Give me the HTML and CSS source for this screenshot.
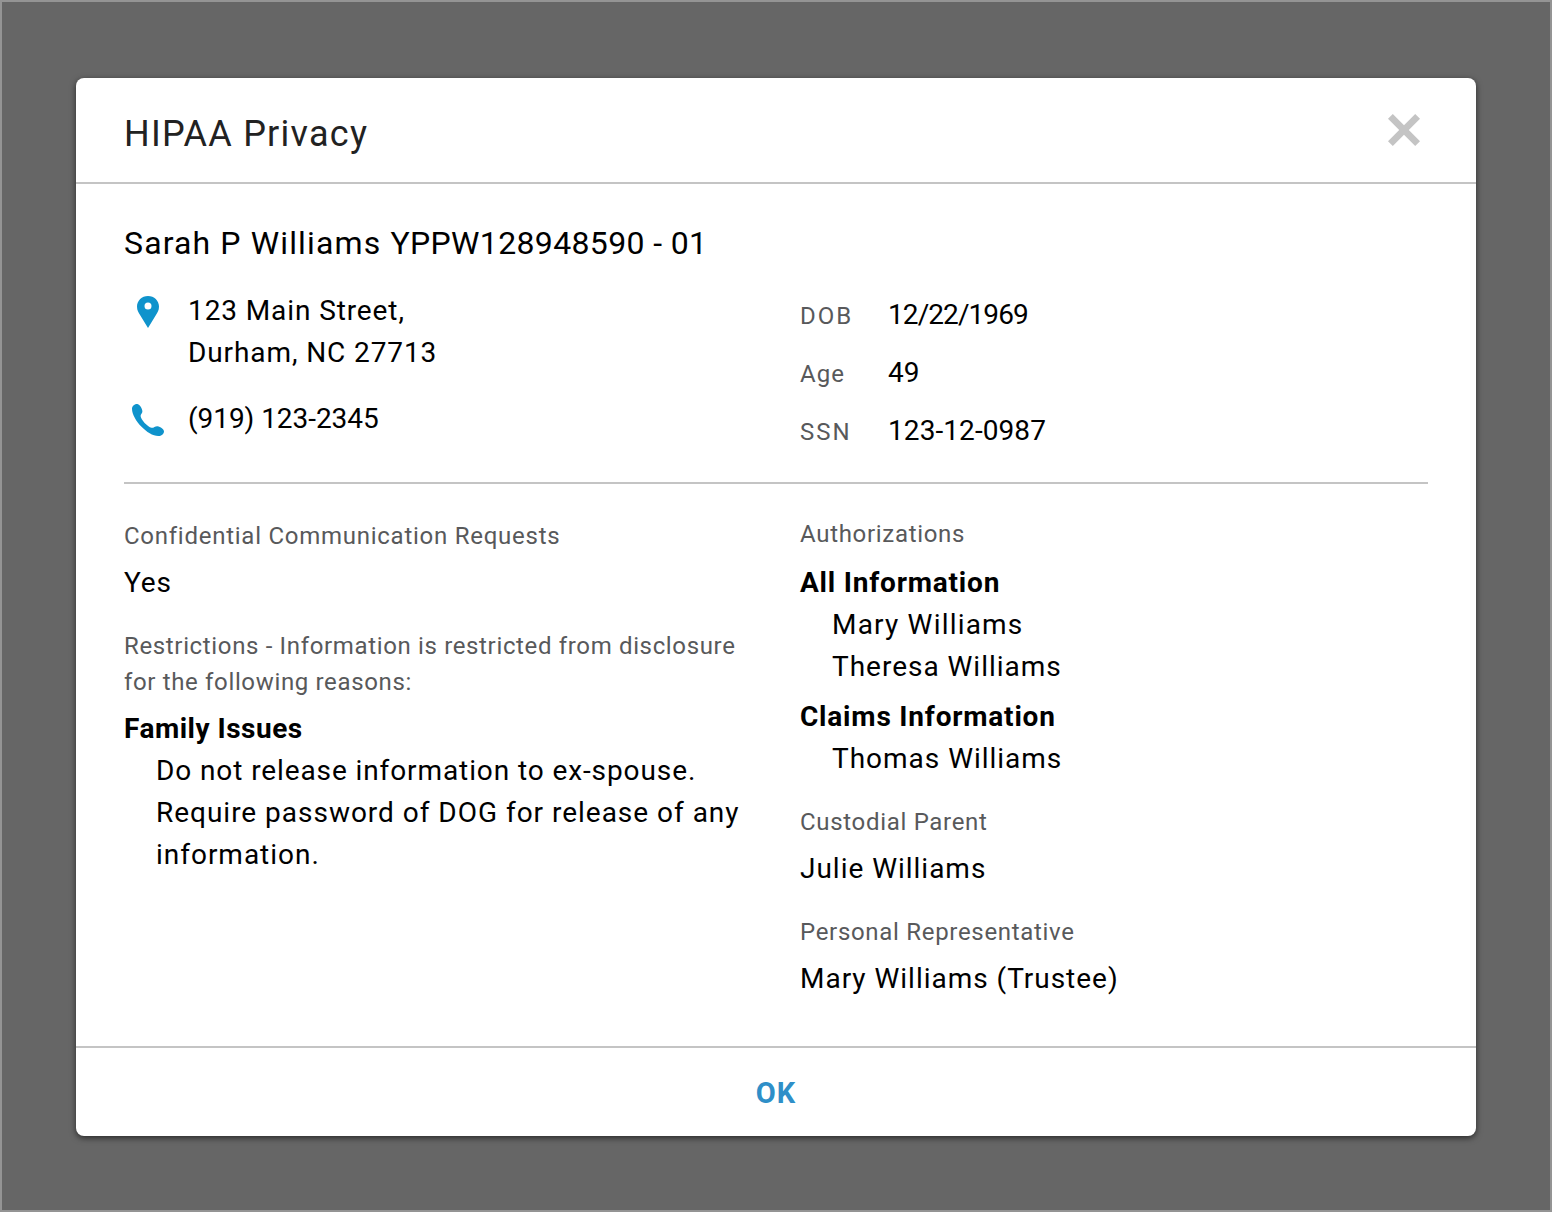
FILE: index.html
```html
<!DOCTYPE html>
<html lang="en">
<head>
<meta charset="utf-8">
<title>HIPAA Privacy</title>
<link rel="stylesheet" href="styles.css">
</head>
<body>
<div class="backdrop">
  <section class="modal" role="dialog" aria-labelledby="modal-title">
    <header class="modal-header">
      <h1 class="modal-title" id="modal-title">HIPAA Privacy</h1>
      <button class="close" aria-label="Close">
        <svg width="32" height="32" viewBox="0 0 32 32"><path d="M4.800 0 16 11.200 27.200 0 32 4.800 20.800 16 32 27.200 27.200 32 16 20.800 4.800 32 0 27.200 11.200 16 0 4.800Z" fill="#c4c4c4"/></svg>
      </button>
    </header>

    <div class="modal-body">
      <h2 class="member">Sarah P Williams <span class="member-id">YPPW128948590 - 01</span></h2>
      <div class="summary">
        <div class="contact">
          <div class="contact-row">
            <svg class="icon" width="48" height="36" viewBox="0 0 48 36"><path fill-rule="evenodd" d="M24 2C17.8 2 13 6.800 13 12.600C13 16.500 14.500 18.700 16.200 21.300L24 34L31.800 21.300C33.500 18.700 35 16.500 35 12.600C35 6.800 30.200 2 24 2ZM24 8.500A3.500 3.500 0 1 1 24 15.500A3.500 3.500 0 1 1 24 8.500Z" fill="#0f93cc"/></svg>
            <p class="text address">123 Main Street,<br>Durham, NC 27713</p>
          </div>
          <div class="contact-row">
            <svg class="icon" width="48" height="36" viewBox="0 0 48 36"><path d="M8 6.800C8 4 10.800 2 13.200 2C15.300 2 18.400 6.500 18.400 9.300C18.400 11.500 16.600 12.200 16.600 14C16.800 17.600 23.500 24.900 27.500 25.800C29.500 26.200 31 24 33.500 24.200C36.500 24.500 40 27.400 40 29.400C40 31.700 37.300 33.900 34.500 34C29 34.100 22.500 30 17.500 24.800C12.200 19.300 8 12.500 8 6.800Z" fill="#0f93cc"/></svg>
            <p class="text phone">(919) 123-2345</p>
          </div>
        </div>
        <dl class="facts">
          <div class="fact"><dt class="label caps">DOB</dt><dd class="text date">12/22/1969</dd></div>
          <div class="fact"><dt class="label age">Age</dt><dd class="text digits">49</dd></div>
          <div class="fact"><dt class="label caps">SSN</dt><dd class="text digits">123-12-0987</dd></div>
        </dl>
      </div>

      <div class="details">
        <div class="column requests">
          <div class="group">
            <h3 class="label confidential">Confidential Communication Requests</h3>
            <p class="text">Yes</p>
          </div>
          <div class="group">
            <h3 class="label restriction">Restrictions - Information is restricted from disclosure for the following reasons:</h3>
            <h4 class="text strong family">Family Issues</h4>
            <p class="text nested">Do not release information to ex-spouse.</p>
            <p class="text nested wide">Require password of DOG for release of any information.</p>
          </div>
        </div>
        <div class="column">
          <div class="group authorizations">
            <h3 class="label">Authorizations</h3>
            <div class="authorization">
              <h4 class="text strong">All Information</h4>
              <p class="text nested mary">Mary Williams</p>
              <p class="text nested wide">Theresa Williams</p>
            </div>
            <div class="authorization">
              <h4 class="text strong">Claims Information</h4>
              <p class="text nested wide">Thomas Williams</p>
            </div>
          </div>
          <div class="group">
            <h3 class="label">Custodial Parent</h3>
            <p class="text wide">Julie Williams</p>
          </div>
          <div class="group">
            <h3 class="label">Personal Representative</h3>
            <p class="text wide">Mary Williams (Trustee)</p>
          </div>
        </div>
      </div>
    </div>

    <footer class="modal-footer"><button class="ok">OK</button></footer>
  </section>
</div>
</body>
</html>
```
FILE: styles.css
```css
* { box-sizing: border-box; }
body, h1, h2, h3, h4, p, dl, dd { margin: 0; }
body { font-family: Roboto, "Liberation Sans", sans-serif; color: #000; }
button { padding: 0; border: 0; background: none; font-family: inherit; cursor: pointer; }

.backdrop {
  display: flex;
  justify-content: center;
  align-items: flex-start;
  width: 1552px;
  height: 1212px;
  padding-top: 76px;
  border: 2px solid #949494;
  background: #666;
}
.modal {
  display: flex;
  flex-direction: column;
  width: 1400px;
  height: 1058px;
  border-radius: 8px;
  background: #fff;
  box-shadow: 0 2px 6px rgba(0, 0, 0, .6);
}
.modal-header {
  display: flex;
  justify-content: space-between;
  align-items: center;
  height: 106px;
  padding: 0 56px 0 48px;
  border-bottom: 2px solid #c4c4c4;
}
.modal-title {
  padding-top: 8px;
  font-size: 36px;
  font-weight: 400;
  line-height: 44px;
  letter-spacing: 1.25px;
  color: #222;
}
.close { display: flex; }

.modal-body { flex: 1; padding: 36px 48px 0; }
.member {
  font-size: 32px;
  font-weight: 400;
  line-height: 46px;
  letter-spacing: 1.13px;
}
.member-id { letter-spacing: .36px; }
.text {
  font-size: 28px;
  font-weight: 400;
  line-height: 42px;
  letter-spacing: .9px;
}
.label {
  font-size: 24px;
  font-weight: 400;
  line-height: 36px;
  letter-spacing: .69px;
  color: #58595b;
}
.strong { font-weight: 700; letter-spacing: .8px; }
.family { letter-spacing: .5px; }
.wide { letter-spacing: .98px; }
.mary { letter-spacing: 1.2px; }
.address { letter-spacing: .9px; }
.phone { letter-spacing: -.05px; }
.date { letter-spacing: -.92px; }
.digits { letter-spacing: .08px; }
.caps { letter-spacing: 2px; }
.age { letter-spacing: 1.1px; }
.confidential { letter-spacing: .74px; }
.restriction { letter-spacing: .65px; }

.summary {
  display: grid;
  grid-template-columns: 676px 1fr;
  height: 218px;
  padding-top: 24px;
  border-bottom: 2px solid #c4c4c4;
}
.contact { display: flex; flex-direction: column; gap: 24px; }
.contact-row { display: flex; gap: 16px; }
.icon { flex: none; margin-top: 4px; }
.facts { display: flex; flex-direction: column; gap: 16px; padding-top: 4px; }
.fact { display: grid; grid-template-columns: 88px 1fr; align-items: baseline; }

.details { display: grid; grid-template-columns: 620px 1fr; column-gap: 56px; padding-top: 32px; }
.column { display: flex; flex-direction: column; gap: 24px; }
.requests { padding-top: 2px; }
.group .label { margin-bottom: 8px; }
.authorizations .label { margin-bottom: 10px; }
.nested { padding-left: 32px; }
.authorization + .authorization { margin-top: 8px; }

.modal-footer {
  display: flex;
  justify-content: center;
  align-items: center;
  height: 90px;
  padding-top: 2px;
  border-top: 2px solid #c4c4c4;
}
.ok { font-size: 29px; font-weight: 700; line-height: 42px; letter-spacing: 1px; color: #2f8fc8; }
```
